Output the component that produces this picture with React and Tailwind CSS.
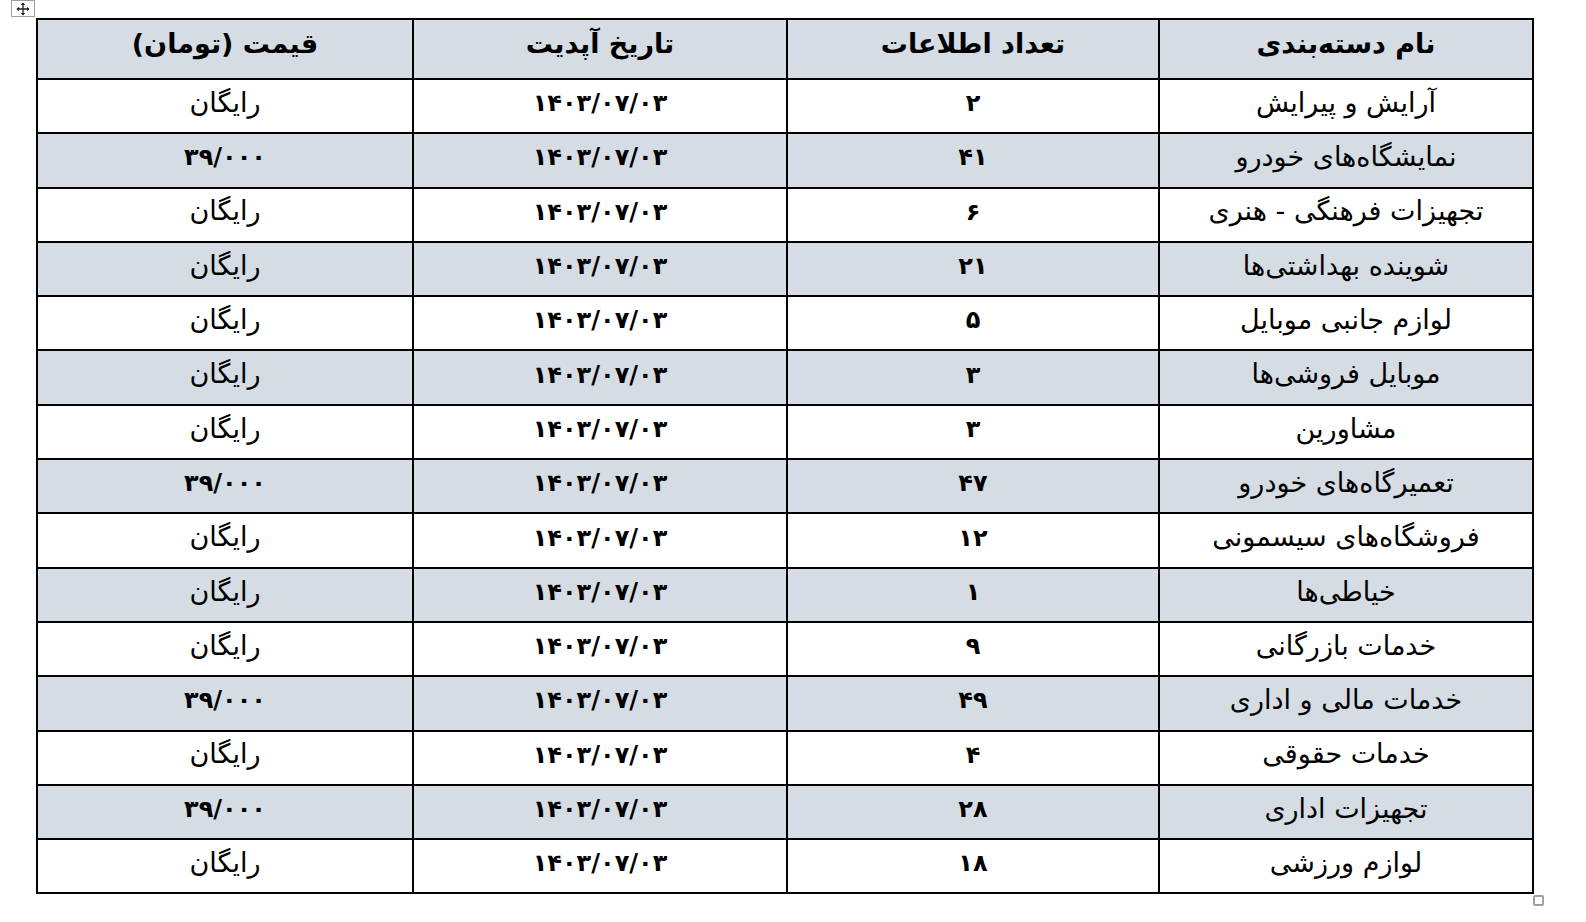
import React from "react";

const rows = [
  ["آرایش و پیرایش", "۲", "رایگان"],
  ["نمایشگاه‌های خودرو", "۴۱", "۳۹/۰۰۰"],
  ["تجهیزات فرهنگی - هنری", "۶", "رایگان"],
  ["شوینده بهداشتی‌ها", "۲۱", "رایگان"],
  ["لوازم جانبی موبایل", "۵", "رایگان"],
  ["موبایل فروشی‌ها", "۳", "رایگان"],
  ["مشاورین", "۳", "رایگان"],
  ["تعمیرگاه‌های خودرو", "۴۷", "۳۹/۰۰۰"],
  ["فروشگاه‌های سیسمونی", "۱۲", "رایگان"],
  ["خیاطی‌ها", "۱", "رایگان"],
  ["خدمات بازرگانی", "۹", "رایگان"],
  ["خدمات مالی و اداری", "۴۹", "۳۹/۰۰۰"],
  ["خدمات حقوقی", "۴", "رایگان"],
  ["تجهیزات اداری", "۲۸", "۳۹/۰۰۰"],
  ["لوازم ورزشی", "۱۸", "رایگان"],
];

const date = "۱۴۰۳/۰۷/۰۳";

// word-style table move handle
const MoveHandle = () => (
  <div className="absolute left-[11px] top-0 w-[24px] h-[17px] border border-[#a0a0a0] bg-white flex items-center justify-center">
    <svg width="14" height="14" viewBox="0 0 14 14">
      <path d="M7 1v12M1 7h12" stroke="#222" strokeWidth="1.3" />
      <path d="M7 0.5l-2.2 2.4h4.4zM7 13.5l-2.2-2.4h4.4zM0.5 7l2.4-2.2v4.4zM13.5 7l-2.4-2.2v4.4z" fill="#222" />
    </svg>
  </div>
);

export default function App() {
  return (
    <div
      className="relative w-full h-screen overflow-hidden bg-white"
      style={{ fontFamily: '"DejaVu Sans", sans-serif' }}
    >
      <MoveHandle />
      <div className="pt-[18px] pl-[36px]">
        <table dir="rtl" className="w-[1496px] border-collapse table-fixed text-black">
          <tbody>
            <tr className="bg-[#d5dce4] h-[60px] font-bold text-[27px]">
              <td className="border-2 border-black text-center w-[374px] pb-[10px]">نام دسته‌بندی</td>
              <td className="border-2 border-black text-center w-[372px] pb-[10px]">تعداد اطلاعات</td>
              <td className="border-2 border-black text-center w-[374px] pb-[10px]">تاریخ آپدیت</td>
              <td className="border-2 border-black text-center w-[376px] pb-[10px]">قیمت (تومان)</td>
            </tr>
            {rows.map((r, i) => (
              <tr
                key={i}
                className={`h-[54.3px] text-[27px] ${i % 2 === 1 ? "bg-[#d5dce4]" : "bg-white"}`}
              >
                <td className="border-2 border-black text-center pb-[6px]">{r[0]}</td>
                <td className="border-2 border-black text-center font-bold text-[24px] pb-[6px]">{r[1]}</td>
                <td className="border-2 border-black text-center font-bold text-[24px] pb-[6px]">{date}</td>
                <td className={`border-2 border-black text-center pb-[6px] ${r[2] === "رایگان" ? "" : "font-bold text-[24px]"}`}>{r[2]}</td>
              </tr>
            ))}
          </tbody>
        </table>
      </div>
      <div className="absolute left-[1533px] top-[895px] w-[11px] h-[11px] border-2 border-[#a0a0a0] rounded-[2px] bg-white" />
    </div>
  );
}
